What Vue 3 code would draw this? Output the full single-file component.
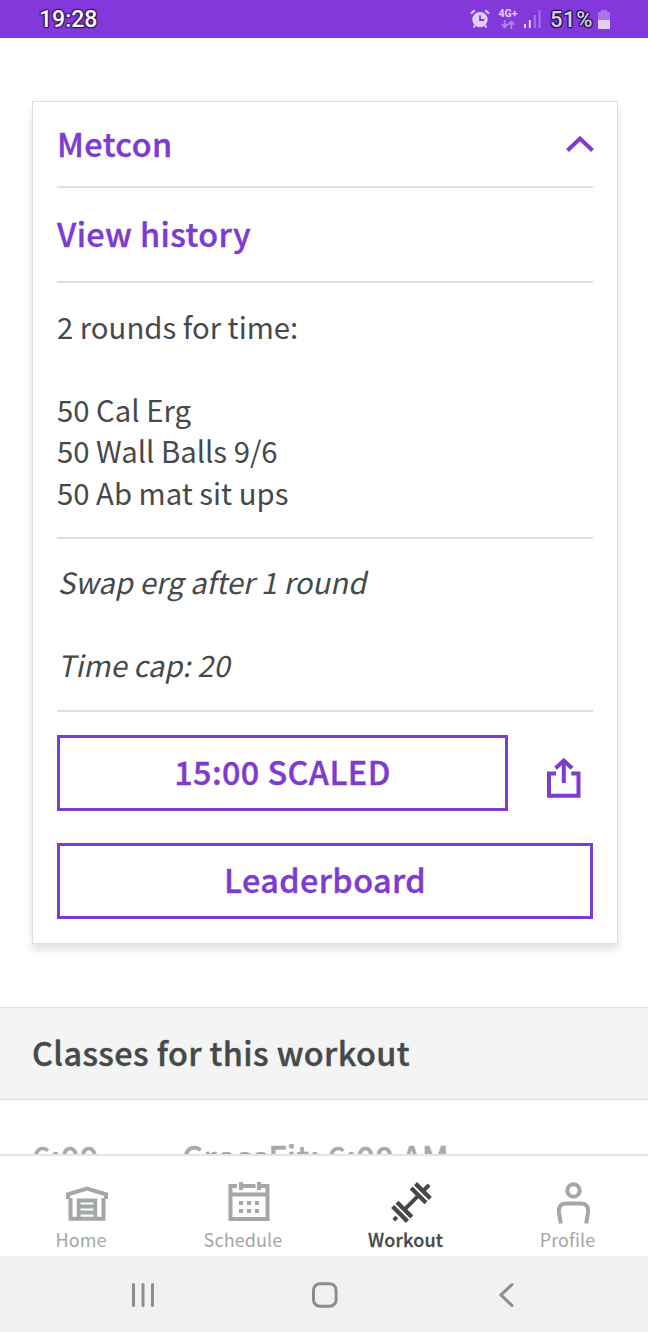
<template>
  <div class="screen">
    <header class="status-bar">
      <span class="clock">19:28</span>
      <div class="status-icons">
        <svg class="alarm" width="20" height="20" viewBox="0 0 20 20">
          <path d="M1 4.6 4.8 1.2M19 4.6 15.2 1.2M5 16.2 3.6 18.6M15 16.2l1.4 2.4" fill="none" stroke="#e3cdfb" stroke-width="2" />
          <circle cx="10" cy="10.6" r="7.7" fill="#e3cdfb" />
          <path d="M10 6.2v4.8h4.2" fill="none" stroke="#8338dc" stroke-width="1.8" />
        </svg>
        <div class="network">
          <span>4G+</span>
          <svg width="14" height="9" viewBox="0 0 14 9" fill="none" stroke="#b084ec" stroke-width="1.8">
            <path d="M3.7 0v7M.7 4.2l3 3 3-3M10.3 9V2M7.3 4.6l3-3 3 3" />
          </svg>
        </div>
        <svg class="signal" width="17" height="18" viewBox="0 0 17 18">
          <path fill="#e3cdfb" d="M0 14h2v4H0zM4.8 10h2v8h-2z" />
          <path fill="#a976ea" d="M9.8 5h2v13h-2zM14.6 0h2v18h-2z" />
        </svg>
        <span class="percent">51%</span>
        <svg class="battery" width="12" height="19" viewBox="0 0 12 19">
          <path fill="#a976ea" d="M3 0h6v2h3v8H0V2h3z" />
          <path fill="#e3cdfb" d="M0 10h12v9H0z" />
        </svg>
      </div>
    </header>

    <main class="content">
      <section class="card">
        <div class="card-header" @click="open = !open">
          <h2>Metcon</h2>
          <svg width="28" height="18" viewBox="0 0 28 18" fill="none" stroke="#7e3bd0" stroke-width="4">
            <path d="M1.500 15.500 14 3.500l12.500 12" />
          </svg>
        </div>
        <template v-if="open">
          <div class="history"><a>View history</a></div>
          <div class="workout"><span v-for="(line, i) in workout" :key="i">{{ line }}</span></div>
          <div class="notes"><span v-for="(line, i) in notes" :key="i">{{ line }}</span></div>
          <div class="actions">
            <button class="btn score">15:00 SCALED</button>
            <svg class="share" width="34" height="42" viewBox="0 0 34 42" fill="none" stroke="#7e3bd0" stroke-width="4">
              <path d="M9 16.500H2v22.200h29.500V16.500h-7.200M16.800 26V3M8.600 11.300l8.200-7.800 8.200 7.800" />
            </svg>
          </div>
          <button class="btn">Leaderboard</button>
        </template>
      </section>

      <h3 class="section-title"><span>Classes for this workout</span></h3>
      <div v-for="item in classes" :key="item.name" class="class-row">
        <span class="time">{{ item.time }}</span>
        <span class="name">{{ item.name }}</span>
      </div>
    </main>

    <nav class="tabs">
      <a class="tab">
        <svg width="42" height="42" viewBox="0 0 42 42" fill="none" stroke="currentColor" stroke-width="4">
          <path d="M4.500 17v20.700h33V17" />
          <path d="M2 18V13.300L21 7.500l19 5.800V18" />
          <path d="M12.700 37V19.500h16.600V37M13 25.500h16M13 31.500h16" stroke-width="3.800" />
        </svg>
        <span>Home</span>
      </a>
      <a class="tab schedule">
        <svg width="42" height="42" viewBox="0 0 42 42" fill="none" stroke="currentColor" stroke-width="4">
          <path d="M9 4.900H2.500V38h37V4.900H33M14.500 4.900h13M2.500 13.500h37" />
          <path d="M13 1v8M31 1v8" />
          <path d="M11 22h4m4 0h4m4 0h4M11 30h4m4 0h4m4 0h4" />
        </svg>
        <span>Schedule</span>
      </a>
      <a class="tab active">
        <svg width="42" height="42" viewBox="0 0 42 42" fill="none" stroke="currentColor">
          <g transform="translate(21.500 21.500) rotate(-45)">
            <path d="M-25 0h4.200M-9 0H9M17 0h8" stroke-width="4" />
            <path d="M-16.200-10.500V10.500M-10-10.500V10.500M10-10.500V10.500M16.200-10.500V10.500" stroke-width="4.300" />
          </g>
        </svg>
        <span>Workout</span>
      </a>
      <a class="tab profile">
        <svg width="42" height="42" viewBox="0 0 42 42" fill="none" stroke="currentColor" stroke-width="4">
          <circle cx="21.500" cy="9.500" r="6.200" />
          <path d="M8.800 42.500 7 31.500c-.8-6 2-9 7-9h15c5 0 7.800 3 7 9L34.200 42.500" />
        </svg>
        <span>Profile</span>
      </a>
    </nav>

    <footer class="system-nav">
      <svg width="24" height="26" viewBox="0 0 24 26"><path d="M2.500 2.500v21M12 2.500v21M21.500 2.500v21" /></svg>
      <svg width="26" height="26" viewBox="0 0 26 26"><rect x="1.500" y="1.700" width="22.600" height="22.600" rx="6.500" /></svg>
      <svg width="24" height="26" viewBox="0 0 24 26"><path d="M17 2.500 6 13l11 10.500" /></svg>
    </footer>
  </div>
</template>

<script setup>
import { ref } from 'vue'

const open = ref(true)
const workout = ['2 rounds for time:', '', '50 Cal Erg', '50 Wall Balls 9/6', '50 Ab mat sit ups']
const notes = ['Swap erg after 1 round', '', 'Time cap: 20']
const classes = [{ time: '6:00', name: 'CrossFit: 6:00 AM' }]
</script>

<style>
body { background: #fff; }
</style>

<style scoped>
.screen { width: 648px; height: 1332px; display: flex; flex-direction: column; overflow: hidden; background: #fff; color: #464949; font-family: "Noto Sans CJK SC", "Noto Sans", sans-serif; }
.screen * { box-sizing: border-box; }
.status-bar { flex: none; height: 38px; padding: 0 38px 0 39px; display: flex; align-items: center; justify-content: space-between; background: #8338dc; font-family: Roboto, sans-serif; font-weight: 500; }
.clock { font-size: 23px; color: #fff; text-shadow: -1px -1px 1px #35165b, 1px -1px 1px #35165b, -1px 1px 1px #35165b, 1px 1px 1px #35165b; }
.status-icons { display: flex; align-items: center; }
.network { display: flex; flex-direction: column; align-items: center; width: 20px; margin-left: 8px; color: #e3cdfb; font-size: 10.5px; font-weight: 700; line-height: 10px; gap: 1px; }
.signal { margin-left: 6px; }
.percent { margin-left: 9px; font-size: 22px; letter-spacing: 0.6px; color: #d8cde6; text-shadow: -1px -1px 1px #241040, 1px -1px 1px #241040, -1px 1px 1px #241040, 1px 1px 1px #241040; }
.battery { margin-left: 5px; }
.content { flex: 1; min-height: 0; overflow: hidden; }
.card { margin: 63px 30px 63px 32px; height: 843px; border: 1px solid #dcdede; padding: 0 24px; background: #fff; box-shadow: 0 6px 8px rgba(0, 0, 0, 0.12); }
.card h2, .history a, .btn { margin: 0; font-size: 32.4px; font-weight: 500; letter-spacing: 0.4px; color: #7e3bd0; -webkit-text-stroke: 0.4px; }
.card-header { height: 86px; display: flex; align-items: center; justify-content: space-between; border-bottom: 2px solid #dddfdf; }
.card-header h2 { padding-bottom: 4px; }
.card-header svg { margin-right: -1px; }
.history { height: 95px; display: flex; align-items: center; padding-bottom: 5px; border-bottom: 2px solid #dddfdf; }
.workout, .notes { font-size: 29.3px; line-height: 41.5px; border-bottom: 2px solid #dddfdf; }
.workout span, .notes span { display: block; min-height: 41.5px; white-space: pre; }
.workout { height: 256px; padding-top: 22.5px; }
.notes { height: 173px; padding: 22px 0 0 1px; }
.notes span { transform: skewX(-12deg); transform-origin: 0 76%; }
.actions { display: flex; align-items: center; margin: 23px 0 32px; }
.btn { display: flex; align-items: center; justify-content: center; width: 100%; height: 76px; padding: 0 0 6px; border: 3px solid #7e3bd0; background: #fff; font-family: inherit; }
.btn.score { width: 451px; }
.share { margin: 10px 0 0 39px; }
.section-title { height: 93px; margin: 0; padding: 0 32px 4px; display: flex; align-items: center; border: 1px solid #dcdede; border-width: 1px 0; background: #f4f4f4; font-size: 32.4px; font-weight: 500; letter-spacing: 0.4px; -webkit-text-stroke: 0.4px; }
.class-row { display: flex; padding: 34px 32px; font-size: 32.4px; line-height: 44px; font-weight: 500; letter-spacing: 0.3px; -webkit-text-stroke: 0.4px; color: #a7aaaa; }
.time { width: 150px; }
.tabs { flex: none; height: 102px; border-top: 2px solid #e3e5e5; display: grid; grid-template-columns: repeat(4, 1fr); background: #fff; color: #a4a7a7; font-size: 18px; }
.tab { display: flex; flex-direction: column; align-items: center; padding-top: 25px; }
.tab svg { margin-left: 12px; overflow: visible; }
.tab span { line-height: 26px; margin-top: 3px; letter-spacing: 0.1px; }
.tab.active { color: #464949; font-weight: 500; }
.tab.active span { -webkit-text-stroke: 0.3px; letter-spacing: 0.2px; padding-left: 1px; }
.tab.profile span { padding-left: 1px; }
.system-nav { flex: none; height: 76px; padding: 1px 129px 0 131px; display: flex; align-items: center; justify-content: space-between; background: #f1f1f1; }
.system-nav svg { fill: none; stroke: #8d8d8d; stroke-width: 3; stroke-linecap: round; }
</style>
